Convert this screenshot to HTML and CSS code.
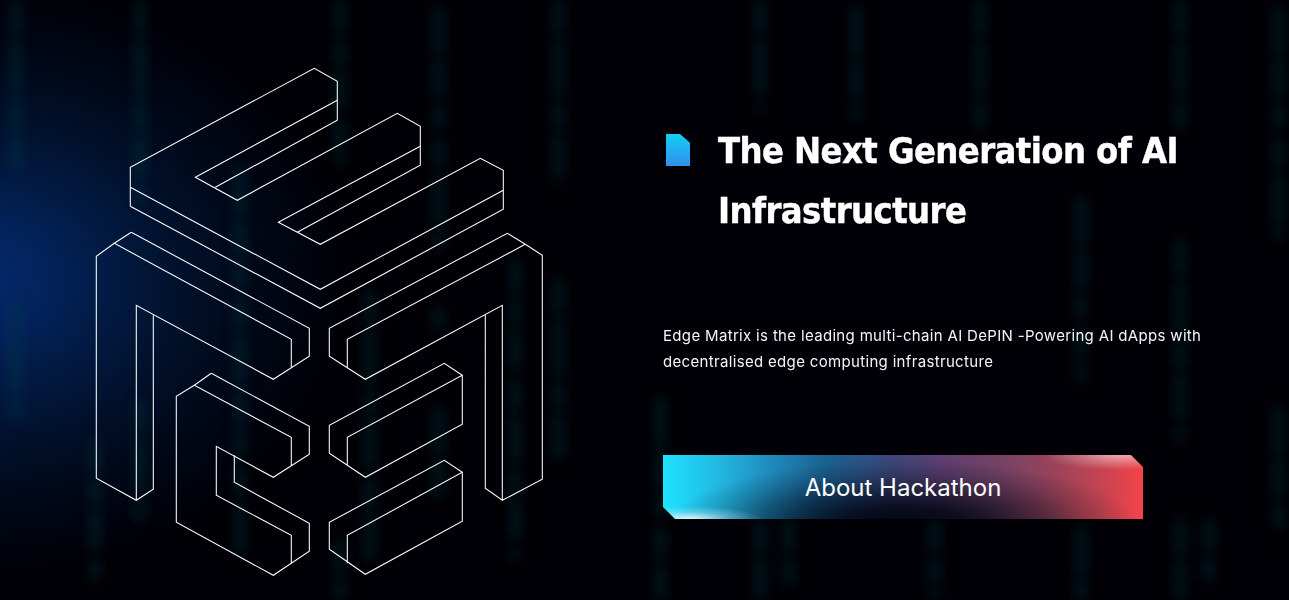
FILE: index.html
```html
<!DOCTYPE html>
<html lang="en">
<head>
<meta charset="utf-8">
<title>Edge Matrix</title>
<link rel="stylesheet" href="styles.css">
</head>
<body>
<main class="hero">
  <svg class="rain" width="1289" height="600" viewBox="0 0 1289 600" aria-hidden="true">
    <defs>
      <filter id="soft" x="-10%" y="-10%" width="120%" height="120%"><feGaussianBlur stdDeviation="6 7"/></filter>
    </defs>
    <g class="rain-drops" filter="url(#soft)">
      <path class="dash-a" d="M16 0V170M16 300V420"/>
      <path class="dash-b" d="M95 440V580"/>
      <path class="dash-a" d="M140 0V200M140 400V520"/>
      <path class="dash-c" d="M240 160V560"/>
      <path class="dash-b" d="M340 0V165M340 540V600"/>
      <path class="dash-a" d="M370 290V560"/>
      <path class="dash-c" d="M438 0V250M438 300V330M438 400V500"/>
      <path class="dash-b" d="M515 260V560"/>
      <path class="dash-a" d="M558 0V190M558 280V460"/>
      <path class="dash-c" d="M661 390V600"/>
      <path class="dash-a" d="M760 0V110M760 520V600"/>
      <path class="dash-b" d="M789 520V590"/>
      <path class="dash-c" d="M856 0V120"/>
      <path class="dash-b" d="M934 520V600"/>
      <path class="dash-a" d="M980 0V130"/>
      <path class="dash-c" d="M1081 190V380M1081 520V600"/>
      <path class="dash-a" d="M1180 0V130M1180 240V440M1180 520V600"/>
      <path class="dash-b" d="M1209 520V580"/>
      <path class="dash-c" d="M1278 0V240M1278 400V540"/>
    </g>
  </svg>
  <div class="logo-side">
    <svg class="logo" width="640" height="600" viewBox="0 0 640 600" aria-hidden="true">
      <g class="logo-lines" transform="translate(.3 .3)">
        <polyline points="130,206 130,167 314,68 337,81 337,120 215,187"/>
        <polyline points="337,100 195,177 237,200 397,113 420,126 420,165 297,232"/>
        <polyline points="420,146 278,222 320,244 480,158 503,170 503,209 320,308 130,206"/>
        <polyline points="130,187 320,289 503,190"/>
        <polyline points="114,243 96,256 96,478 136,500 153,489 153,315"/>
        <polyline points="131,232 114,243 291,339 291,367"/>
        <polyline points="131,232 309,328 309,356 273,379 136,305 136,500"/>
        <polyline points="194,385 176,396 176,522 273,575 309,551 309,523 234,482 234,455"/>
        <polyline points="211,373 194,385 291,437 291,465"/>
        <polyline points="211,373 309,426 309,454 273,477 216,446 216,495 291,535 291,563"/>
        <polyline points="347,367 347,339 525,244 507,233 329,328 329,356 365,379 502,305 502,500 485,488 485,314"/>
        <polyline points="525,244 542,255 542,479 502,500"/>
        <polyline points="347,465 347,437 462,375 444,363 329,425 329,453 365,477 462,424 462,375"/>
        <polyline points="347,563 347,535 462,472 444,460 329,522 329,549 365,574 462,521 462,472"/>
      </g>
    </svg>
  </div>
  <section class="content">
    <div class="heading-row">
      <span class="marker"></span>
      <h1 class="title">The Next Generation of AI Infrastructure</h1>
    </div>
    <p class="lead">Edge Matrix is the leading multi-chain AI DePIN -Powering AI dApps with decentralised edge computing infrastructure</p>
    <a class="cta" href="#">About Hackathon</a>
  </section>
</main>
</body>
</html>
```
FILE: styles.css
```css
html, body { margin: 0; padding: 0; background: #000006; }
.hero {
  position: relative;
  width: 1289px;
  height: 600px;
  overflow: hidden;
  display: flex;
  background:
    radial-gradient(ellipse 370px 300px at -20px 280px, #04296c 0%, #032259 20%, #02193f 38%, #011029 56%, #000818 74%, #00030c 90%, rgba(0,0,6,0) 100%),
    #000006;
  color: #fff;
}
.rain { position: absolute; left: 0; top: 0; }
.rain-drops path { fill: none; stroke: #0a3c48; stroke-width: 12; opacity: .32; }
.dash-a { stroke-dasharray: 34 7 52 9 26 6 44 10; }
.dash-b { stroke-dasharray: 46 8 24 7 38 11 30 6; stroke-dashoffset: 14; }
.dash-c { stroke-dasharray: 28 9 48 6 36 8 22 12; stroke-dashoffset: 30; }
.logo-side { position: relative; flex: 0 0 640px; height: 600px; }
.logo { display: block; }
.logo-lines polyline { fill: none; stroke: #fff; stroke-width: 1.05; stroke-linejoin: miter; }
.content {
  position: relative;
  flex: 0 0 480px;
  margin-left: 23px;
  padding-top: 121px;
  display: flex;
  flex-direction: column;
  align-items: flex-start;
}
.heading-row { display: flex; align-items: flex-start; gap: 28px; padding-left: 3px; }
.marker {
  flex: none;
  width: 24px;
  height: 32px;
  margin-top: 13px;
  background: linear-gradient(180deg, #13cff5 0%, #3090ee 100%);
  clip-path: polygon(0 0, 58% 0, 100% 27%, 100% 100%, 0 100%);
}
.title {
  margin: 0;
  width: 470px;
  font-family: "DejaVu Sans Condensed", "DejaVu Sans", sans-serif;
  font-stretch: condensed;
  font-size: 36px;
  font-weight: 700;
  line-height: 60px;
  letter-spacing: -.58px;
  -webkit-text-stroke: .4px #fff;
}
.lead {
  margin: 82px 0 0;
  width: 560px;
  font-family: Inter, "Liberation Sans", sans-serif;
  font-size: 15px;
  font-weight: 400;
  line-height: 26px;
  letter-spacing: .33px;
  color: #f4f6f8;
}
.cta {
  position: relative;
  margin-top: 80px;
  width: 480px;
  height: 64px;
  display: flex;
  align-items: center;
  justify-content: center;
  font-family: Inter, "Liberation Sans", sans-serif;
  font-size: 24px;
  font-weight: 400;
  color: #fff;
  text-decoration: none;
  clip-path: polygon(0 0, 468px 0, 100% 12px, 100% 100%, 12px 100%, 0 52px);
  background:
    radial-gradient(ellipse 75px 13px at 25px 100%, rgba(255,255,255,.85), rgba(190,235,250,.35) 55%, rgba(255,255,255,0) 100%),
    radial-gradient(ellipse 75px 15px at 455px 0, rgba(255,255,255,.55), rgba(255,255,255,.22) 55%, rgba(255,255,255,0) 100%),
    radial-gradient(ellipse 235px 66px at 240px 110%, rgba(2,4,18,1) 0%, rgba(2,4,18,.85) 28%, rgba(2,4,18,.5) 55%, rgba(2,4,18,.2) 78%, rgba(2,4,18,0) 100%),
    linear-gradient(90deg, #1de3ff 0%, #22b6e0 12%, #1f84b6 24%, #1a6090 34%, #3c4678 48%, #5c3f70 58%, #744266 70%, #9c4359 82%, #c94450 92%, #f5434a 100%);
}
```
